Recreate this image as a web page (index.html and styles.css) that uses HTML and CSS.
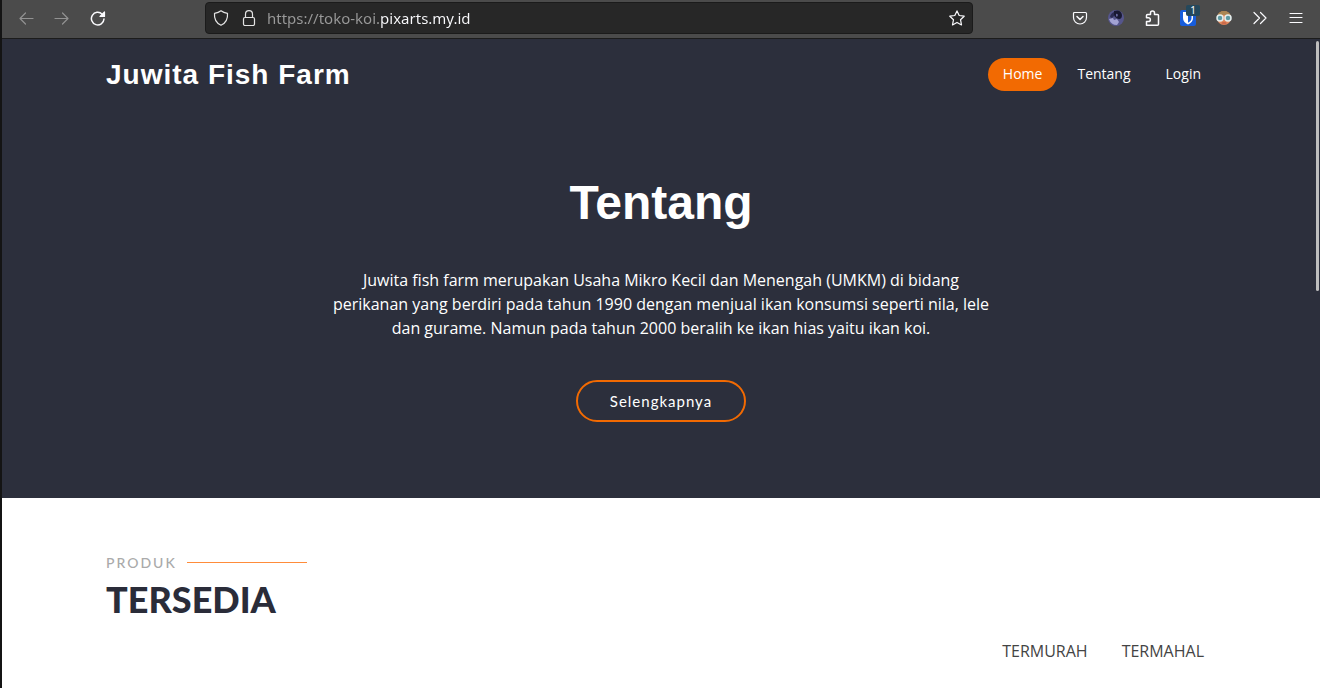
FILE: index.html
```
<!DOCTYPE html>
<html lang="id">
<head>
    <meta charset="UTF-8">
    <meta name="viewport" content="width=device-width, initial-scale=1.0">
    <title>Juwita Fish Farm</title>
    <link rel="stylesheet" href="styles.css">
</head>
<body>

<div class="window">
    <div class="toolbar">
        <div class="nav-buttons">
            <button class="tool disabled" aria-label="Back" disabled>
                <svg viewBox="0 0 16 16"><path d="M15 8.500H2M7.500 3L2 8.500L7.500 14"/></svg>
            </button>
            <button class="tool disabled" aria-label="Forward" disabled>
                <svg viewBox="0 0 16 16"><path d="M1 8.500H14M8.500 3L14 8.500L8.500 14"/></svg>
            </button>
            <button class="tool" aria-label="Reload">
                <svg viewBox="0 0 16 16"><path class="bold" d="M12.200 4.200A6.300 6.300 0 1 0 14 9"/><path class="solid" d="M14.500 2V6.500H10Z"/></svg>
            </button>
        </div>
        <div class="urlbar">
            <svg viewBox="0 0 16 16"><path d="M8 .8C10 2.400 12 3 14.500 3.300C15 9 13 13 8 15.300C3 13 1 9 1.500 3.300C4 3 6 2.400 8 .8Z"/></svg>
            <svg class="lock" viewBox="0 0 16 16"><path d="M4.500 7.500V4.200a3.500 3.500 0 0 1 7 0V7.500"/><rect x="2.500" y="7.500" width="11" height="8" rx="1.500"/></svg>
            <input class="url" type="text" aria-label="Address" value="https://toko-koi.pixarts.my.id">
            <button class="star" aria-label="Bookmark">
                <svg viewBox="0 0 16 16"><path d="M8 .9L10.200 5.500L15.200 6.200L11.500 9.700L12.500 14.900L8 12.400L3.500 14.900L4.500 9.700L.8 6.200L5.800 5.500Z"/></svg>
            </button>
        </div>
        <div class="extensions">
            <button class="tool" aria-label="Pocket">
                <svg viewBox="0 0 16 16"><path d="M2.500 2.500H13.500Q14.500 2.500 14.500 3.500V7.500A6.500 6.500 0 0 1 1.500 7.500V3.500Q1.500 2.500 2.500 2.500Z"/><path class="bold" d="M5 6.500L8 9.500L11 6.500"/></svg>
            </button>
            <button class="tool" aria-label="Moon">
                <svg class="art" viewBox="0 0 16 16">
                    <circle cx="8" cy="8" r="8" fill="#55558c"/>
                    <path d="M6 1Q13-1 14 5Q14 9 11 9Q7 8 6 5Z" fill="#191933"/>
                    <path d="M2 7Q3 3 6 2L6 6L4 8Z" fill="#2b2b52"/>
                    <path d="M8 4Q9 3 10 5L9 7L8 6Z" fill="#6868a0"/>
                    <path d="M1 9L5 8L6 10L9 9L11 12L9 15Q3 15 1 9Z" fill="#a3a3d3"/>
                </svg>
            </button>
            <button class="tool" aria-label="Extensions">
                <svg viewBox="0 0 16 16"><path class="bold" d="M2.500 15.200V11.500H4.500a1.800 1.800 0 0 0 0-3.700H2.500V5.500Q2.500 4.500 3.500 4.500H6.500V3a2 2 0 0 1 4 0V4.500H13.500Q14.500 4.500 14.500 5.500V14.200Q14.500 15.200 13.500 15.200Z"/></svg>
            </button>
            <button class="tool" aria-label="Bitwarden">
                <svg class="art" viewBox="0 0 16 16">
                    <rect width="16" height="16" rx="2" fill="#175ddc"/>
                    <path d="M3 2H13V8Q13 12 8 14.500Q3 12 3 8Z" fill="#fff"/>
                    <path d="M8 3.500H11.500V8Q11.500 11 8 12.800Z" fill="#175ddc"/>
                </svg>
                <span class="badge">1</span>
            </button>
            <button class="tool" aria-label="Profile">
                <svg class="art" viewBox="0 0 16 16">
                    <circle cx="8" cy="8" r="7" fill="#e3895d"/>
                    <path d="M1 6Q3 1 8 1Q13 1 15 6L11 5H5Z" fill="#ab8654"/>
                    <path d="M5 13Q8 10.500 11 13Q8 16 5 13Z" fill="#cc6b4c"/>
                    <circle cx="4" cy="8" r="3" fill="#5e9aa3" stroke="#e5eeee" stroke-width="1.500"/>
                    <circle cx="12" cy="8" r="3" fill="#5e9aa3" stroke="#e5eeee" stroke-width="1.500"/>
                </svg>
            </button>
            <button class="tool" aria-label="More tools">
                <svg viewBox="0 0 16 16"><path d="M2 2.500L7.500 8L2 13.500M8.500 2.500L14 8L8.500 13.500"/></svg>
            </button>
            <button class="tool" aria-label="Menu">
                <svg viewBox="0 0 16 16"><path d="M2 3.500H14M2 7.500H14M2 12.500H14"/></svg>
            </button>
        </div>
    </div>

    <header class="hero">
        <div class="container navbar">
            <a class="logo" href="#">Juwita Fish Farm</a>
            <nav class="menu">
                <a class="active" href="#">Home</a>
                <a href="#tentang">Tentang</a>
                <a href="#login">Login</a>
            </nav>
        </div>
        <div class="intro" id="tentang">
            <h1>Tentang</h1>
            <p>Juwita fish farm merupakan Usaha Mikro Kecil dan Menengah (UMKM) di bidang perikanan yang berdiri pada tahun 1990 dengan menjual ikan konsumsi seperti nila, lele dan gurame. Namun pada tahun 2000 beralih ke ikan hias yaitu ikan koi.</p>
            <a class="btn-more" href="#produk">Selengkapnya</a>
        </div>
        <div class="scroll-thumb"></div>
    </header>

    <main class="container products" id="produk">
        <div class="section-title">
            <h2>Produk</h2>
            <p>Tersedia</p>
        </div>
        <div class="sort">
            <a href="#termurah">TERMURAH</a>
            <a href="#termahal">TERMAHAL</a>
        </div>
    </main>
</div>

</body>
</html>
```
FILE: styles.css
```
* {
    box-sizing: border-box;
}
body {
    margin: 0;
    overflow: hidden;
    background: #fff;
    color: #444;
    font-family: "Open Sans", sans-serif;
    font-size: 16px;
    line-height: 24px;
}
a {
    color: inherit;
    text-decoration: none;
}
button {
    padding: 0;
    border: none;
    background: none;
    color: #fbfbfe;
    cursor: pointer;
}
.window {
    min-height: 100vh;
    border-left: 2px solid #141414;
}

/* browser bar */
.toolbar {
    display: flex;
    align-items: center;
    height: 39px;
    padding: 0 16px 3px;
    background: #4b4b4b;
    border-bottom: 1px solid #1c1c1c;
}
.nav-buttons, .extensions {
    display: flex;
    gap: 20px;
}
.tool, .star {
    position: relative;
    width: 16px;
    height: 16px;
}
.disabled {
    color: #929292;
}
svg {
    display: block;
    flex: none;
    width: 16px;
    height: 16px;
    fill: none;
    stroke: currentColor;
    stroke-width: 1.2;
    stroke-linejoin: round;
    stroke-linecap: round;
}
.bold {
    stroke-width: 1.5;
}
.solid {
    fill: currentColor;
}
.art {
    stroke: none;
}
.badge {
    position: absolute;
    top: -5px;
    right: -4px;
    width: 14px;
    height: 11px;
    border-radius: 2px;
    background: #24485c;
    color: #fff;
    font: 10px/11px "Noto Sans", sans-serif;
}
.urlbar {
    display: flex;
    flex: 1;
    align-items: center;
    height: 32px;
    margin: 0 99px;
    padding: 0 7px;
    border: 1px solid #1b1b1b;
    border-radius: 4px;
    background: #272727;
    color: #e4e4e4;
}
.lock {
    margin: 0 10px 0 12px;
}
.url {
    flex: 1;
    min-width: 0;
    height: 30px;
    padding: 0;
    border: none;
    outline: none;
    /* subdomain is dimmed, main domain is white */
    background: linear-gradient(90deg, #9a9a9a 113px, #fbfbfe 113px);
    -webkit-background-clip: text;
    background-clip: text;
    color: transparent;
    font: 15px "Noto Sans", sans-serif;
}

.container {
    width: 100%;
    max-width: 1140px;
    margin: 0 auto;
    padding: 0 15px;
}

/* hero */
.hero {
    position: relative;
    padding-bottom: 76px;
    background: #2c2f3c;
    color: #fff;
}
.navbar {
    display: flex;
    justify-content: space-between;
    align-items: center;
    height: 71px;
}
.logo {
    font: bold 28px/34px "Liberation Sans", Arial, sans-serif;
    letter-spacing: 1px;
}
.menu {
    display: flex;
    gap: 5px;
    font-size: 14px;
    line-height: 18px;
}
.menu a {
    padding: 7px 15px 8px;
    border-radius: 50px;
}
.menu .active {
    background: #f26a02;
}
.intro {
    display: flex;
    flex-direction: column;
    align-items: center;
    max-width: 700px;
    margin: 0 auto;
    padding: 64px 20px 0;
    text-align: center;
}
.intro h1 {
    margin: 0 0 36px;
    font: bold 48px/58px "Liberation Sans", Arial, sans-serif;
}
.intro p {
    margin: 0 0 40px;
}
.btn-more {
    padding: 9px 32px;
    border: 2px solid #f26a02;
    border-radius: 50px;
    font: 15px/20px Lato, sans-serif;
    letter-spacing: 1px;
}
.scroll-thumb {
    position: absolute;
    top: 2px;
    right: 1px;
    width: 3px;
    height: 250px;
    border-radius: 2px;
    background: #bebebe;
}

/* products */
.products {
    padding-top: 54px;
}
.section-title h2 {
    display: flex;
    align-items: center;
    gap: 10px;
    margin: 0;
    color: #aaa;
    font: 500 14px/21px Lato, sans-serif;
    letter-spacing: 2px;
    text-transform: uppercase;
}
.section-title h2::after {
    content: "";
    width: 120px;
    height: 1px;
    background: #ff8c3a;
}
.section-title p {
    margin: 4px 0 0;
    color: #2a2c39;
    font: 900 36px/44px Lato, sans-serif;
    text-transform: uppercase;
}
.sort {
    display: flex;
    justify-content: flex-end;
    gap: 34px;
    padding: 18px 12px 24px;
}
```
